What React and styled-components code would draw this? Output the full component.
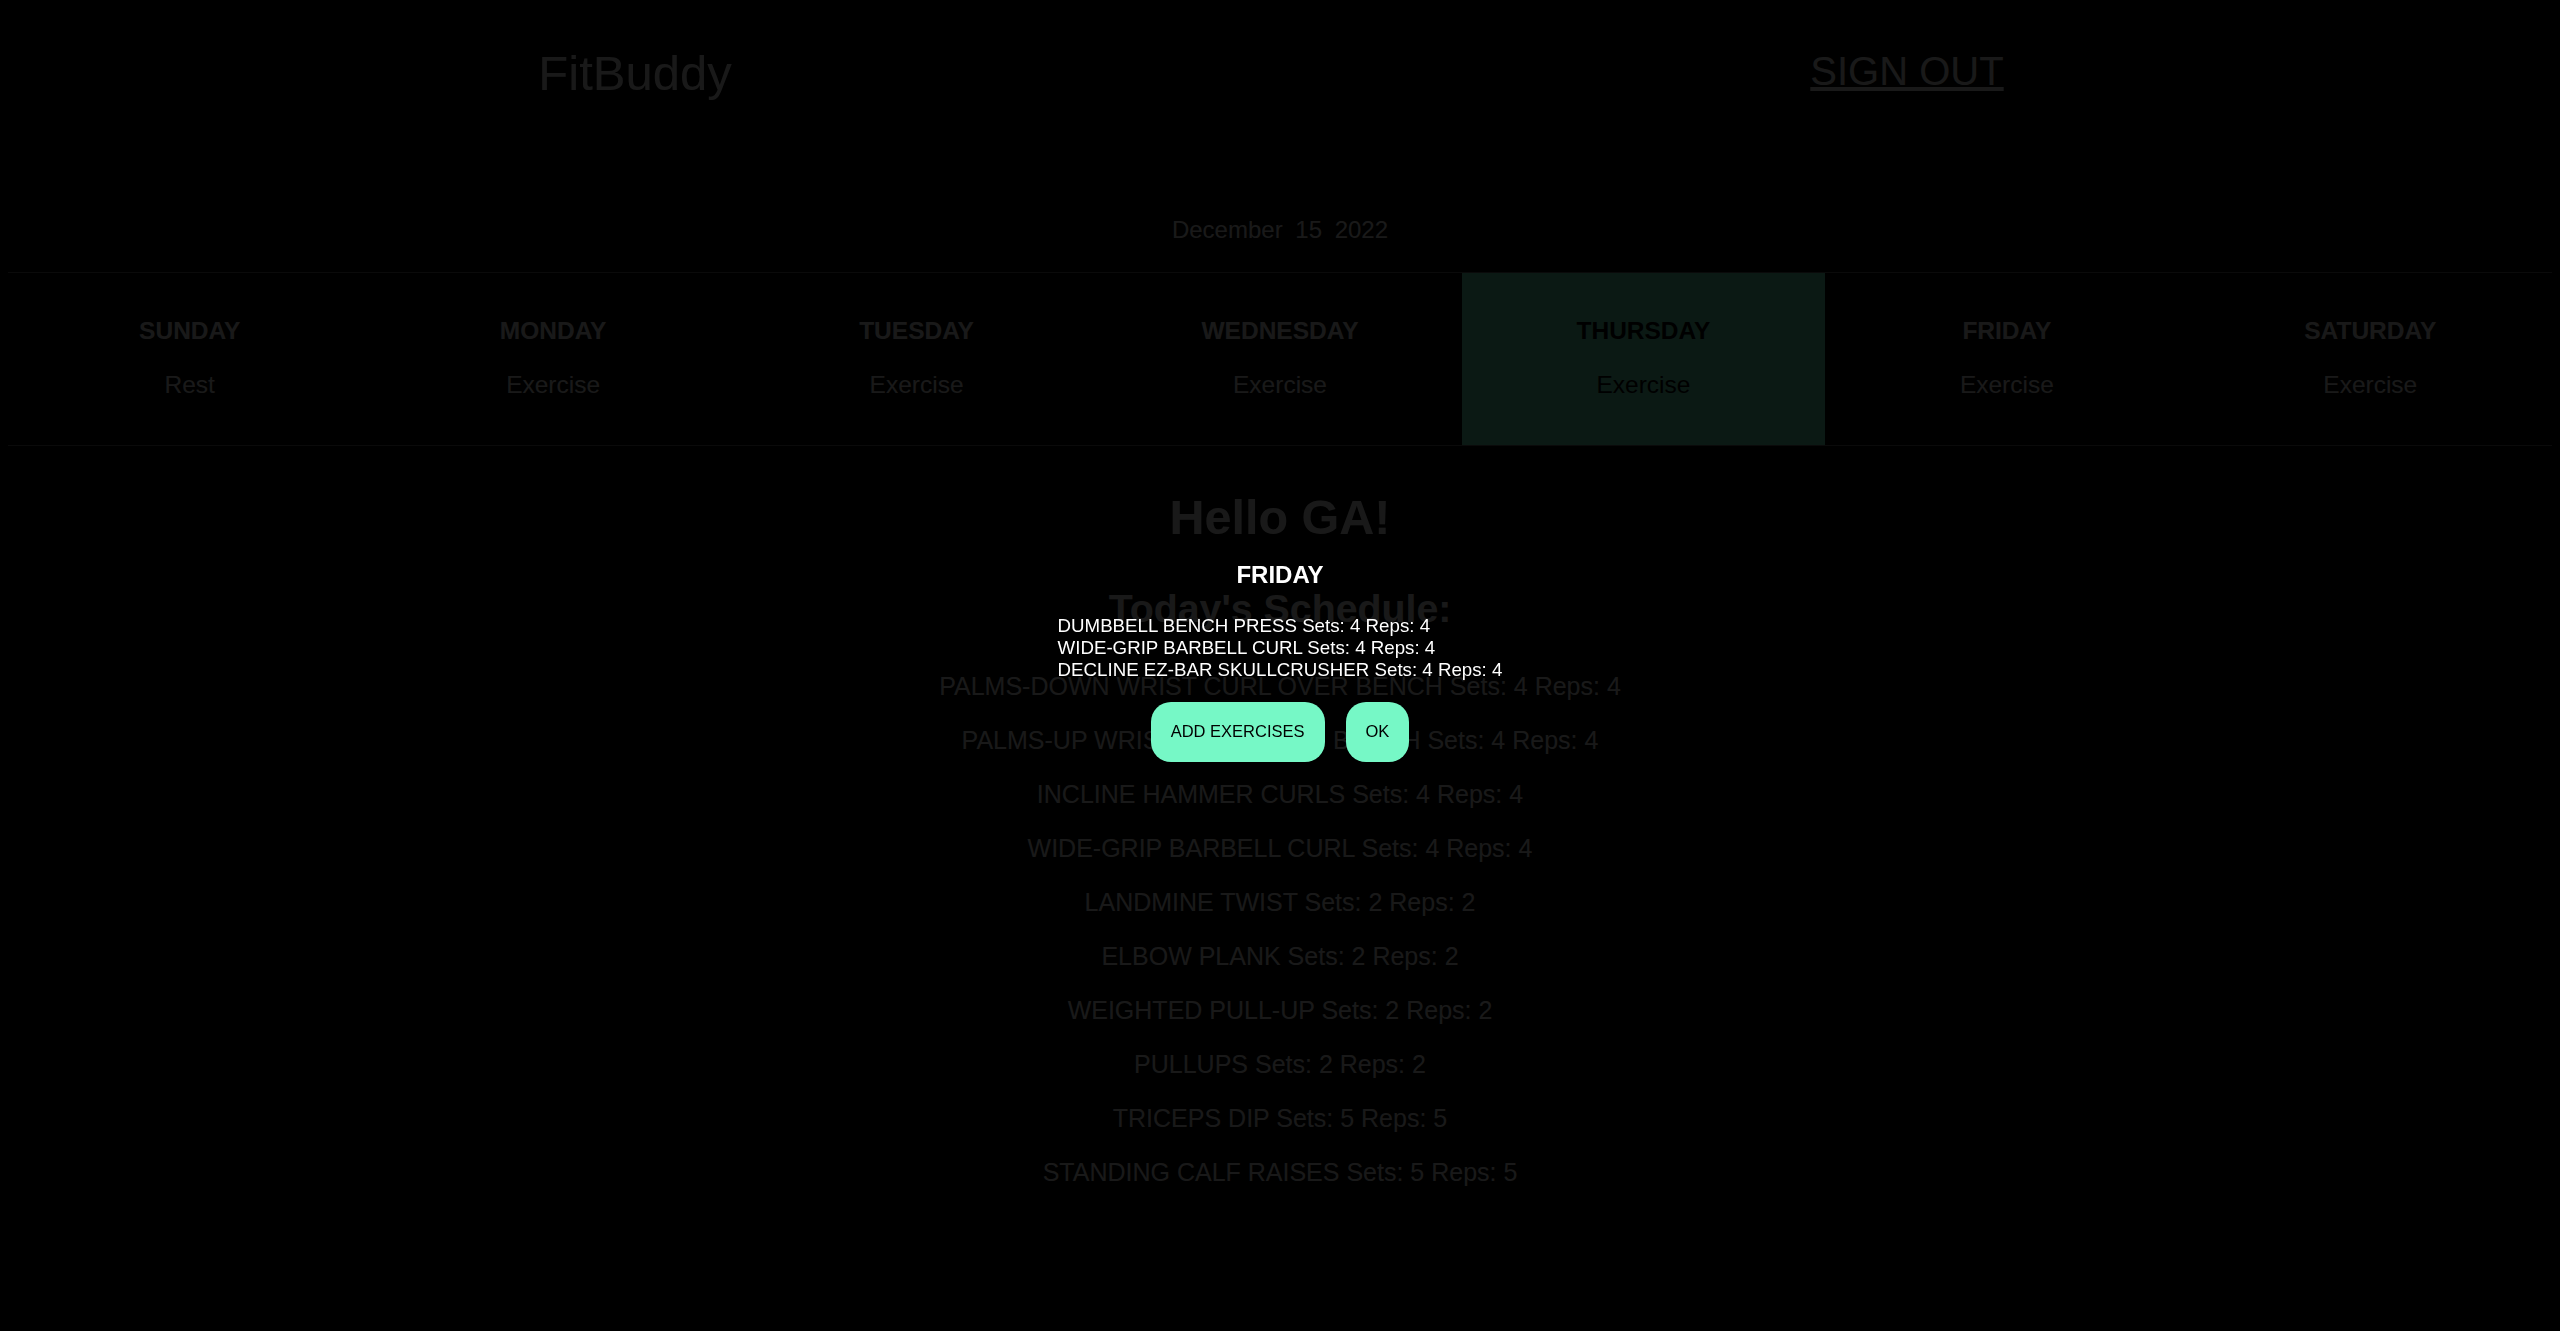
import React from 'react';
import styled, { createGlobalStyle } from 'styled-components';

const mint = '#76f8c6';

const GlobalStyle = createGlobalStyle`
  body {
    margin: 8px;
    background: #000;
    color: #fff;
    font-family: "Liberation Sans", Arial, sans-serif;
  }
`;

const Header = styled.header`
  display: flex;
  justify-content: space-around;
  align-items: center;
  height: 130px;
`;

const Logo = styled.div`
  font-size: 49px;
`;

const SignOut = styled.button`
  background: none;
  border: none;
  color: #fff;
  font-family: inherit;
  font-size: 40px;
  text-decoration: underline;
  padding: 0 18px 4px;
  cursor: pointer;
`;

const DateLine = styled.div`
  margin-top: 78px;
  text-align: center;
  font-size: 24px;
  word-spacing: 6px;
`;

const Week = styled.div`
  display: grid;
  grid-template-columns: repeat(7, 1fr);
  margin-top: 28px;
  border-top: 1px solid #666;
  border-bottom: 1px solid #666;
`;

const DayCell = styled.div`
  text-align: center;
  padding: 44px 0 46px;
  background: ${p => (p.$today ? mint : 'transparent')};
  color: ${p => (p.$today ? '#000' : '#fff')};
`;

const DayName = styled.div`
  font-size: 24.5px;
  font-weight: bold;
  margin-bottom: 25.5px;
`;

const DayPlan = styled.div`
  font-size: 24.5px;
`;

const Greeting = styled.h1`
  margin: 43px 0 0;
  text-align: center;
  font-size: 48.5px;
`;

const Subtitle = styled.h2`
  margin: 41.5px 0 0;
  text-align: center;
  font-size: 39.3px;
`;

const ExerciseList = styled.div`
  display: flex;
  flex-direction: column;
  align-items: center;
  gap: 25px;
  margin-top: 41px;
`;

const ExerciseItem = styled.div`
  font-size: 25px;
`;

const Overlay = styled.div`
  position: fixed;
  inset: 0;
  background: rgba(0, 0, 0, 0.9);
  display: flex;
  align-items: center;
  justify-content: center;
`;

const Modal = styled.div`
  display: flex;
  flex-direction: column;
  align-items: center;
  margin-bottom: 9px;
  color: #fff;
`;

const ModalTitle = styled.div`
  font-size: 24px;
  font-weight: bold;
  margin-bottom: 26px;
`;

const ModalList = styled.div`
  font-size: 18.72px;
  text-align: left;
  margin-bottom: 21px;
`;

const ButtonRow = styled.div`
  display: flex;
  gap: 21px;
`;

const ActionButton = styled.button`
  background: ${mint};
  color: #000;
  border: none;
  border-radius: 20px;
  padding: 20.5px 20px;
  font-family: inherit;
  font-size: 16.5px;
  cursor: pointer;
`;

const days = [
  { name: 'SUNDAY', plan: 'Rest' },
  { name: 'MONDAY', plan: 'Exercise' },
  { name: 'TUESDAY', plan: 'Exercise' },
  { name: 'WEDNESDAY', plan: 'Exercise' },
  { name: 'THURSDAY', plan: 'Exercise', today: true },
  { name: 'FRIDAY', plan: 'Exercise' },
  { name: 'SATURDAY', plan: 'Exercise' },
];

const todays = [
  ['PALMS-DOWN WRIST CURL OVER BENCH', 4, 4],
  ['PALMS-UP WRIST CURL OVER BENCH', 4, 4],
  ['INCLINE HAMMER CURLS', 4, 4],
  ['WIDE-GRIP BARBELL CURL', 4, 4],
  ['LANDMINE TWIST', 2, 2],
  ['ELBOW PLANK', 2, 2],
  ['WEIGHTED PULL-UP', 2, 2],
  ['PULLUPS', 2, 2],
  ['TRICEPS DIP', 5, 5],
  ['STANDING CALF RAISES', 5, 5],
];

const friday = [
  ['DUMBBELL BENCH PRESS', 4, 4],
  ['WIDE-GRIP BARBELL CURL', 4, 4],
  ['DECLINE EZ-BAR SKULLCRUSHER', 4, 4],
];

const App = () => {
  return (
    <>
      <GlobalStyle />
      <Header>
        <Logo>FitBuddy</Logo>
        <SignOut>SIGN OUT</SignOut>
      </Header>
      <DateLine>December 15 2022</DateLine>
      <Week>
        {days.map(d => (
          <DayCell key={d.name} $today={d.today}>
            <DayName>{d.name}</DayName>
            <DayPlan>{d.plan}</DayPlan>
          </DayCell>
        ))}
      </Week>
      <Greeting>Hello GA!</Greeting>
      <Subtitle>Today's Schedule:</Subtitle>
      <ExerciseList>
        {todays.map(([name, sets, reps], i) => (
          <ExerciseItem key={i}>{name} Sets: {sets} Reps: {reps}</ExerciseItem>
        ))}
      </ExerciseList>
      <Overlay>
        <Modal>
          <ModalTitle>FRIDAY</ModalTitle>
          <ModalList>
            {friday.map(([name, sets, reps], i) => (
              <div key={i}>{name} Sets: {sets} Reps: {reps}</div>
            ))}
          </ModalList>
          <ButtonRow>
            <ActionButton>ADD EXERCISES</ActionButton>
            <ActionButton>OK</ActionButton>
          </ButtonRow>
        </Modal>
      </Overlay>
    </>
  );
};

export default App;
